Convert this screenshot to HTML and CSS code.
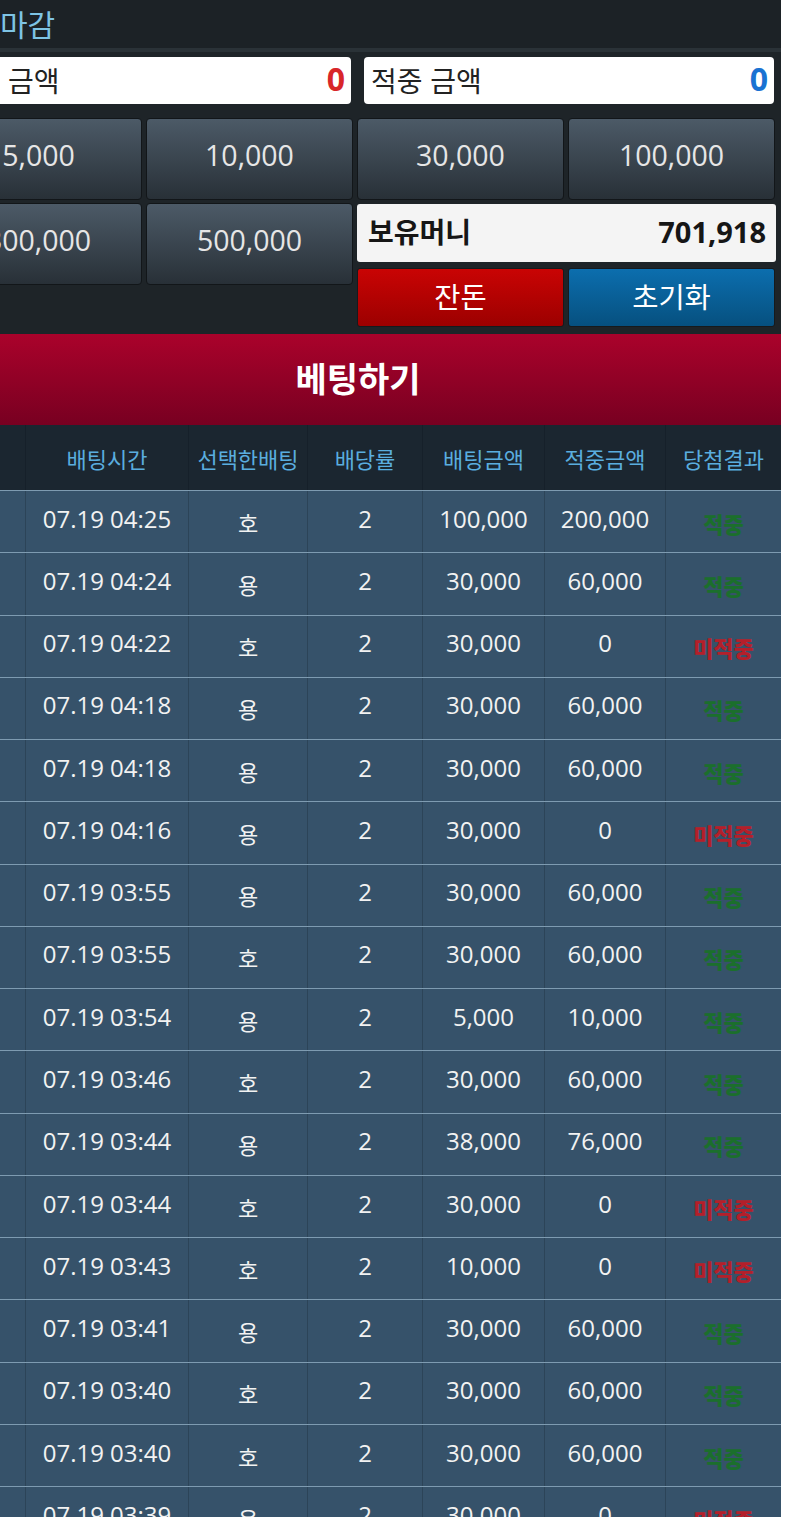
FILE: index.html
```html
<!DOCTYPE html>
<html lang="ko">
<head>
<meta charset="utf-8">
<link rel="stylesheet" href="styles.css">
</head>
<body>
<div class="page">
  <div class="stage">
    <div class="topbar"><span class="title">마감</span></div>
    <div class="controls">
      <div class="amounts">
        <div class="amount-box first"><span class="label">금액</span><span class="val red">0</span></div>
        <div class="amount-box"><span class="label">적중 금액</span><span class="val blue">0</span></div>
      </div>
      <div class="chips">
        <button class="chip">5,000</button>
        <button class="chip">10,000</button>
        <button class="chip">30,000</button>
        <button class="chip">100,000</button>
        <button class="chip">300,000</button>
        <button class="chip">500,000</button>
        <div class="side">
          <div class="money"><span>보유머니</span><span>701,918</span></div>
          <button class="act act-red">잔돈</button>
          <button class="act act-blue">초기화</button>
        </div>
      </div>
    </div>
    <div class="banner">베팅하기</div>
    <div class="table">
      <div class="row head">
        <div></div><div>배팅시간</div><div>선택한배팅</div><div>배당률</div><div>배팅금액</div><div>적중금액</div><div>당첨결과</div>
      </div>
      <div class="row"><div></div><div>07.19 04:25</div><div class="ko">호</div><div>2</div><div>100,000</div><div>200,000</div><div class="win">적중</div></div>
      <div class="row"><div></div><div>07.19 04:24</div><div class="ko">용</div><div>2</div><div>30,000</div><div>60,000</div><div class="win">적중</div></div>
      <div class="row"><div></div><div>07.19 04:22</div><div class="ko">호</div><div>2</div><div>30,000</div><div>0</div><div class="lose">미적중</div></div>
      <div class="row"><div></div><div>07.19 04:18</div><div class="ko">용</div><div>2</div><div>30,000</div><div>60,000</div><div class="win">적중</div></div>
      <div class="row"><div></div><div>07.19 04:18</div><div class="ko">용</div><div>2</div><div>30,000</div><div>60,000</div><div class="win">적중</div></div>
      <div class="row"><div></div><div>07.19 04:16</div><div class="ko">용</div><div>2</div><div>30,000</div><div>0</div><div class="lose">미적중</div></div>
      <div class="row"><div></div><div>07.19 03:55</div><div class="ko">용</div><div>2</div><div>30,000</div><div>60,000</div><div class="win">적중</div></div>
      <div class="row"><div></div><div>07.19 03:55</div><div class="ko">호</div><div>2</div><div>30,000</div><div>60,000</div><div class="win">적중</div></div>
      <div class="row"><div></div><div>07.19 03:54</div><div class="ko">용</div><div>2</div><div>5,000</div><div>10,000</div><div class="win">적중</div></div>
      <div class="row"><div></div><div>07.19 03:46</div><div class="ko">호</div><div>2</div><div>30,000</div><div>60,000</div><div class="win">적중</div></div>
      <div class="row"><div></div><div>07.19 03:44</div><div class="ko">용</div><div>2</div><div>38,000</div><div>76,000</div><div class="win">적중</div></div>
      <div class="row"><div></div><div>07.19 03:44</div><div class="ko">호</div><div>2</div><div>30,000</div><div>0</div><div class="lose">미적중</div></div>
      <div class="row"><div></div><div>07.19 03:43</div><div class="ko">호</div><div>2</div><div>10,000</div><div>0</div><div class="lose">미적중</div></div>
      <div class="row"><div></div><div>07.19 03:41</div><div class="ko">용</div><div>2</div><div>30,000</div><div>60,000</div><div class="win">적중</div></div>
      <div class="row"><div></div><div>07.19 03:40</div><div class="ko">호</div><div>2</div><div>30,000</div><div>60,000</div><div class="win">적중</div></div>
      <div class="row"><div></div><div>07.19 03:40</div><div class="ko">호</div><div>2</div><div>30,000</div><div>60,000</div><div class="win">적중</div></div>
      <div class="row"><div></div><div>07.19 03:39</div><div class="ko">용</div><div>2</div><div>30,000</div><div>0</div><div class="lose">미적중</div></div>
    </div>
  </div>
</div>
</body>
</html>
```

FILE: styles.css
```css
html, body {
  margin: 0;
  padding: 0;
  background: #ffffff;
}
body {
  font-family: "Open Sans", "Noto Sans CJK KR", sans-serif;
  height: 1517px;
  overflow: hidden;
}
.page {
  width: 781px;
  overflow: hidden;
  background: #1e2428;
}
.stage {
  width: 846px;
  margin-left: -65px;
}
.topbar {
  height: 48px;
  background: #1c2226;
  border-bottom: 4px solid #2a3237;
  display: flex;
  align-items: center;
  padding-left: 65px;
}
.title {
  font-family: "Noto Sans CJK KR", sans-serif;
  color: #7ec4e4;
  font-size: 30px;
  line-height: 1;
  margin-top: -2px;
}
.controls {
  background: #1e2428;
  padding: 5px 6px 7px 0;
}
.amounts {
  display: grid;
  grid-template-columns: 1fr 1fr;
  gap: 13px;
  padding-left: 6px;
  padding-right: 1px;
}
.amount-box {
  height: 47px;
  background: #ffffff;
  border-radius: 4px;
  display: flex;
  align-items: center;
  justify-content: space-between;
  padding: 0 6px 0 7px;
  box-sizing: border-box;
}
.amount-box.first {
  padding-left: 67px;
}
.label {
  font-family: "Noto Sans CJK KR", sans-serif;
  font-size: 28px;
  color: #222;
  line-height: 1;
  margin-top: -2px;
}
.val {
  font-family: "Open Sans", sans-serif;
  font-weight: 700;
  font-size: 32px;
  line-height: 1;
  margin-top: -4px;
}
.red { color: #d8262a; }
.blue { color: #1a72d2; }
.chips {
  margin-top: 14px;
  display: grid;
  grid-template-columns: repeat(4, 1fr);
  grid-template-rows: 82px auto;
  gap: 3px 4px;
}
.chip {
  height: 82px;
  border: 1px solid #121619;
  border-radius: 4px;
  background: linear-gradient(#4c5a67, #283037);
  color: #e6e6e6;
  font-family: "Open Sans", sans-serif;
  font-size: 28.5px;
  padding: 0 0 8px 0;
  margin: 0;
}
.side {
  grid-column: 3 / span 2;
  display: grid;
  grid-template-columns: 1fr 1fr;
  grid-template-rows: 58px 59px;
  gap: 6px 4px;
  padding-top: 1px;
}
.money {
  grid-column: 1 / span 2;
  background: #f4f4f4;
  border-radius: 3px;
  display: flex;
  align-items: center;
  justify-content: space-between;
  padding: 0 10px 4px 11px;
  font-weight: 700;
  font-size: 29px;
  color: #161616;
  margin-right: -1px;
}
.money span:first-child {
  font-family: "Noto Sans CJK KR", sans-serif;
  font-size: 28px;
}
.act {
  border: 1px solid #161a1d;
  border-radius: 3px;
  color: #ffffff;
  font-family: "Noto Sans CJK KR", sans-serif;
  font-size: 28.5px;
  padding: 0 0 4px 0;
  margin: 0;
}
.act-red {
  background: linear-gradient(#c90404, #9c0000);
}
.act-blue {
  background: linear-gradient(#0c6eae, #06507f);
}
.banner {
  height: 91px;
  background: linear-gradient(#aa022b, #780021);
  color: #ffffff;
  font-family: "Noto Sans CJK KR", sans-serif;
  font-weight: 700;
  font-size: 34px;
  display: flex;
  align-items: center;
  justify-content: center;
  padding-bottom: 4px;
  box-sizing: border-box;
}
.table {
  background: #36526a;
}
.row {
  display: grid;
  grid-template-columns: 90px 163px 119px 115px 122px 121px 116px;
  height: 62.27px;
  box-sizing: border-box;
  border-top: 1px solid #7e9bb1;
}
.row > div {
  display: flex;
  align-items: center;
  justify-content: center;
  border-left: 1px solid #2c4458;
  color: #f2f2f2;
  font-size: 24px;
  padding-bottom: 7px;
  box-sizing: border-box;
}
.row > div:first-child {
  border-left: none;
}
.row .ko {
  font-family: "Noto Sans CJK KR", sans-serif;
  font-size: 22px;
  padding-bottom: 0;
  padding-top: 0;
}
.row .win, .row .lose {
  font-family: "Noto Sans CJK KR", sans-serif;
  font-weight: 900;
  font-size: 22px;
  padding-bottom: 0;
  padding-top: 2px;
}
.row .win { color: #1b6f2c; }
.row .lose { color: #b41f2a; }
.row.head {
  height: 65px;
  border-top: none;
  background: #1b2630;
}
.row.head > div {
  color: #5aaddf;
  font-family: "Noto Sans CJK KR", sans-serif;
  font-size: 22px;
  border-left-color: #16202a;
  padding-bottom: 0;
}
```
